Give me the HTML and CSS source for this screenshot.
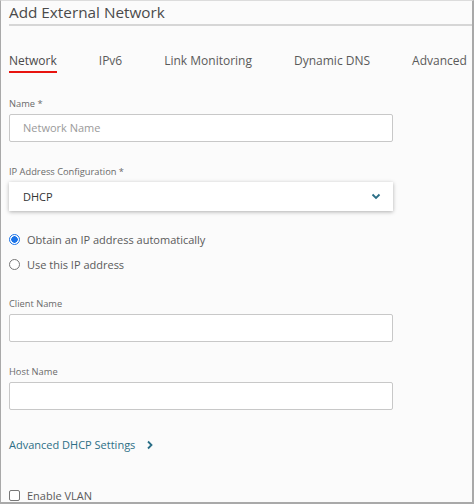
FILE: index.html
```html
<!DOCTYPE html>
<html lang="en">
<head>
	<meta charset="UTF-8">
	<title>Add External Network</title>
	<link rel="stylesheet" href="styles.css">
</head>
<body>
<div class="panel">
	<h2 class="panel-tit">Add External Network</h2>

	<ul class="tabs">
		<li class="on">Network</li>
		<li>IPv6</li>
		<li>Link Monitoring</li>
		<li>Dynamic DNS</li>
		<li>Advanced</li>
	</ul>

	<div class="form">
		<div class="field">
			<label>Name *</label>
			<div class="inp"><span class="ph">Network Name</span></div>
		</div>
		<div class="field">
			<label>IP Address Configuration *</label>
			<div class="sel">
				<span>DHCP</span>
				<svg width="10" height="7" viewBox="0 0 10 7"><path d="M1.5 1.5 L5 5 L8.5 1.5" fill="none" stroke="#2a6e86" stroke-width="1.8"/></svg>
			</div>
		</div>

		<ul class="radios">
			<li><i class="radio on"></i>Obtain an IP address automatically</li>
			<li><i class="radio"></i>Use this IP address</li>
		</ul>

		<div class="field">
			<label>Client Name</label>
			<div class="inp"></div>
		</div>
		<div class="field">
			<label>Host Name</label>
			<div class="inp"></div>
		</div>

		<a class="more">Advanced DHCP Settings
			<svg width="8" height="10" viewBox="0 0 8 10"><path d="M2 1.5 L5.5 5 L2 8.5" fill="none" stroke="#2a6e86" stroke-width="1.8"/></svg>
		</a>

		<div class="check"><i class="box"></i>Enable VLAN</div>
	</div>
</div>
</body>
</html>
```

FILE: styles.css
```css
body,h2,ul{
	margin: 0;
	padding: 0;
}
ul{
	list-style: none;
}
body{
	font-family: "Open Sans", "Liberation Sans", sans-serif;
	background-color: #fff;
}
.panel{
	box-sizing: border-box;
	width: 474px;
	height: 504px;
	overflow: hidden;
	background-color: #fbfbfb;
	border: 1px solid #a9a9a9;
	border-top-color: #dcdcdc;
	border-right-width: 2px;
	border-bottom-width: 2px;
}
.panel-tit{
	margin-left: 8px;
	height: 23px;
	font-weight: normal;
	font-size: 15.3px;
	line-height: 22px;
	color: #4a4a4a;
	border-bottom: 2px solid #d6d6d6;
}
.tabs{
	display: flex;
	gap: 42px;
	margin: 25px 0 0 8px;
	font-size: 12px;
	color: #5a5a5a;
	white-space: nowrap;
}
.tabs li{
	flex-shrink: 0;
	line-height: 20px;
	border-bottom: 2px solid transparent;
}
.tabs li.on{
	color: #4a4a4a;
	border-bottom-color: #e8140f;
}
.form{
	width: 384px;
	margin: 23px 0 0 8px;
}
.field + .field{
	margin-top: 22px;
}
.field label{
	display: block;
	font-size: 9.3px;
	line-height: 14px;
	padding-top: 1px;
	color: #6a6a6a;
	margin-bottom: 3px;
}
.inp{
	box-sizing: border-box;
	height: 28px;
	background-color: #fff;
	border: 1px solid #c8c8c8;
	border-radius: 2px;
	padding-left: 13px;
	font-size: 11px;
	line-height: 26px;
}
.ph{
	color: #9a9a9a;
}
.sel{
	display: flex;
	justify-content: space-between;
	align-items: center;
	height: 29px;
	padding: 0 12px 0 14px;
	background-color: #fff;
	box-shadow: 0 1px 4px rgba(0,0,0,0.3);
	font-size: 11px;
	color: #333;
}
.radios{
	margin-top: 16px;
	font-size: 11px;
	color: #5a5a5a;
}
.radios li{
	display: flex;
	align-items: center;
	height: 25px;
}
.radio{
	box-sizing: border-box;
	width: 11px;
	height: 11px;
	border: 1px solid #777;
	border-radius: 50%;
	margin-right: 7px;
	background-color: #fff;
}
.radio.on{
	border-color: #1a73e8;
	background: radial-gradient(circle, #1a73e8 3px, #fff 3.5px);
}
.radios + .field{
	margin-top: 19px;
}
.more{
	display: flex;
	align-items: center;
	gap: 11px;
	margin-top: 26px;
	font-size: 11px;
	line-height: 17px;
	color: #2d6f86;
}
.check{
	display: flex;
	align-items: center;
	margin-top: 34px;
	font-size: 11px;
	line-height: 17px;
	color: #5a5a5a;
}
.box{
	box-sizing: border-box;
	width: 11px;
	height: 11px;
	border: 1px solid #777;
	border-radius: 2px;
	margin-right: 7px;
	background-color: #fff;
}
```
